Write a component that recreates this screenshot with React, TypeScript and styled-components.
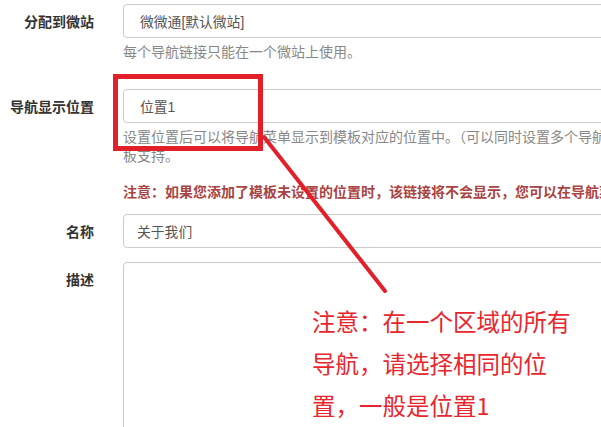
import React from "react";
import styled, { createGlobalStyle } from "styled-components";

const Global = createGlobalStyle`
  html, body {
    margin: 0;
    padding: 0;
    background: #fff;
    overflow: hidden;
  }
  body {
    font-family: "Liberation Sans", "Noto Sans CJK SC", sans-serif;
    color: #333;
  }
`;

const Page = styled.div`
  position: relative;
  width: 601px;
  height: 427px;
  padding-top: 4px;
  box-sizing: border-box;
  overflow: hidden;
`;

const Row = styled.div<{ $gap?: number }>`
  display: grid;
  grid-template-columns: 94px 590px;
  column-gap: 29px;
  margin-bottom: ${(p) => p.$gap ?? 16}px;
`;

const Label = styled.label`
  text-align: right;
  font-size: 14px;
  font-weight: bold;
  color: #333;
  padding-top: 8px;
  line-height: 20px;
  white-space: nowrap;
`;

const Field = styled.div`
  display: flex;
  flex-direction: column;
`;

const Input = styled.div<{ $pad?: number }>`
  height: 34px;
  box-sizing: border-box;
  border: 1px solid #ccc;
  border-radius: 4px;
  padding: 0 12px 0 ${(p) => p.$pad ?? 16}px;
  display: flex;
  align-items: center;
  font-size: 13.8px;
  color: #555;
`;

const TextArea = styled.div`
  height: 200px;
  border: 1px solid #ccc;
  border-radius: 4px;
`;

const Help = styled.p`
  margin: 5px 0 0;
  font-size: 14px;
  line-height: 19px;
  color: #888;
`;

const Warn = styled.p`
  margin: 16px 0 0;
  font-size: 14px;
  line-height: 20px;
  font-weight: bold;
  color: #a94442;
  white-space: nowrap;
`;

const Overlay = styled.svg`
  position: absolute;
  left: 0;
  top: 0;
  pointer-events: none;
`;

const Note = styled.div`
  position: absolute;
  left: 312px;
  top: 300px;
  width: 266px;
  font-family: "Noto Sans CJK SC", sans-serif;
  font-size: 23.5px;
  line-height: 42px;
  color: #e8262d;
`;

export default function App() {
  return (
    <Page>
      <Global />
      <Row $gap={27}>
        <Label>分配到微站</Label>
        <Field>
          <Input>微微通[默认微站]</Input>
          <Help>每个导航链接只能在一个微站上使用。</Help>
        </Field>
      </Row>
      <Row $gap={12}>
        <Label>导航显示位置</Label>
        <Field>
          <Input>位置1</Input>
          <Help>
            设置位置后可以将导航菜单显示到模板对应的位置中。（可以同时设置多个导航位置，前提是模板支持。
          </Help>
          <Warn>
            注意：如果您添加了模板未设置的位置时，该链接将不会显示，您可以在导航菜单中修改位置。
          </Warn>
        </Field>
      </Row>
      <Row $gap={14}>
        <Label>名称</Label>
        <Field>
          <Input $pad={13}>关于我们</Input>
        </Field>
      </Row>
      <Row>
        <Label>描述</Label>
        <Field>
          <TextArea />
        </Field>
      </Row>
      <Overlay width="601" height="427">
        <rect x="115.5" y="76.5" width="145" height="72" fill="none" stroke="#e3202a" strokeWidth="5" />
        <line x1="264" y1="137" x2="385" y2="291" stroke="#e3202a" strokeWidth="4" strokeLinecap="round" />
      </Overlay>
      <Note>注意：在一个区域的所有导航，请选择相同的位置，一般是位置1</Note>
    </Page>
  );
}
